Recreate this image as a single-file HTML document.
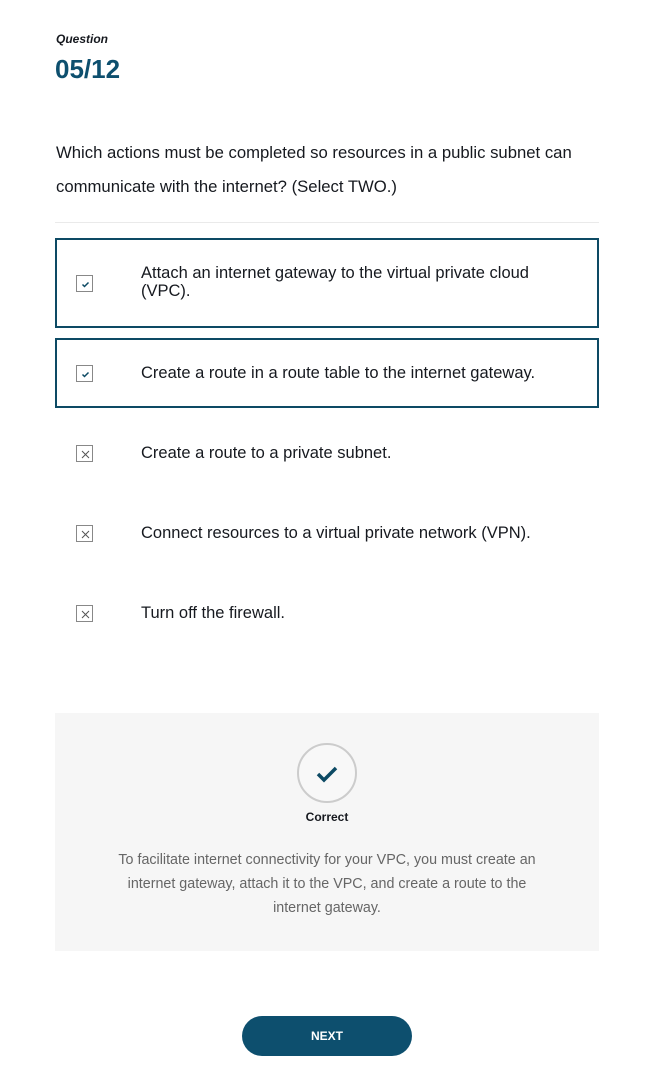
<!DOCTYPE html>
<html><head><meta charset="utf-8"><style>
body{margin:0;width:661px;height:1074px;background:#fff;font-family:"Liberation Sans",sans-serif;position:relative;overflow:hidden;color:#16191f}
.a{position:absolute}
.box{position:absolute;left:55px;width:540px;border:2px solid #0d4a64}
.cb{position:absolute;left:76px;width:17px;height:17px;border:1px solid #888;box-sizing:border-box;background:#fff}
.cb svg{position:absolute;left:0;top:0}
.t{position:absolute;left:141px;font-size:16.5px;line-height:18px;color:#16191f}
</style></head><body>
<div class="a" style="left:56px;top:32px;font-size:12px;font-style:italic;font-weight:bold">Question</div>
<div class="a" style="left:55px;top:54px;font-size:26px;font-weight:bold;color:#0d4f6e">05/12</div>
<div class="a" style="left:56px;top:136px;width:580px;font-size:16.7px;line-height:34px">Which actions must be completed so resources in a public subnet can communicate with the internet? (Select TWO.)</div>
<div class="a" style="left:55px;top:222px;width:544px;height:1px;background:#eaeaea"></div>
<div class="box" style="top:238px;height:86px"></div>
<div class="box" style="top:338px;height:66px"></div>
<div class="cb" style="top:275px"><svg width="17" height="17"><path d="M5.5 8.5l2 2 4-4" stroke="#0d4a64" stroke-width="1.5" fill="none"/></svg></div>
<div class="cb" style="top:365px"><svg width="17" height="17"><path d="M5.5 8.5l2 2 4-4" stroke="#0d4a64" stroke-width="1.5" fill="none"/></svg></div>
<div class="cb" style="top:445px"><svg width="17" height="17"><path d="M5 5l7 7M12 5l-7 7" stroke="#555" stroke-width="1" fill="none"/></svg></div>
<div class="cb" style="top:525px"><svg width="17" height="17"><path d="M5 5l7 7M12 5l-7 7" stroke="#555" stroke-width="1" fill="none"/></svg></div>
<div class="cb" style="top:605px"><svg width="17" height="17"><path d="M5 5l7 7M12 5l-7 7" stroke="#555" stroke-width="1" fill="none"/></svg></div>
<div class="t" style="top:264px;width:410px">Attach an internet gateway to the virtual private cloud (VPC).</div>
<div class="t" style="top:364px">Create a route in a route table to the internet gateway.</div>
<div class="t" style="top:444px">Create a route to a private subnet.</div>
<div class="t" style="top:524px">Connect resources to a virtual private network (VPN).</div>
<div class="t" style="top:604px">Turn off the firewall.</div>
<div class="a" style="left:55px;top:713px;width:544px;height:238px;background:#f6f6f6"></div>
<div class="a" style="left:297px;top:743px;width:56px;height:56px;border:2px solid #ccc;border-radius:50%;background:#f8f8f8">
<svg width="56" height="56"><path d="M19 29l6 6 12-12" stroke="#0d4a64" stroke-width="3.5" fill="none"/></svg></div>
<div class="a" style="left:55px;top:810px;width:544px;text-align:center;font-size:12px;font-weight:bold">Correct</div>
<div class="a" style="left:107px;top:848px;width:440px;text-align:center;font-size:14.3px;line-height:24px;color:#666">To facilitate internet connectivity for your VPC, you must create an internet gateway, attach it to the VPC, and create a route to the internet gateway.</div>
<div class="a" style="left:242px;top:1016px;width:170px;height:40px;border-radius:20px;background:#0d4f6e;color:#fff;font-size:12px;font-weight:bold;text-align:center;line-height:40px">NEXT</div>
</body></html>
